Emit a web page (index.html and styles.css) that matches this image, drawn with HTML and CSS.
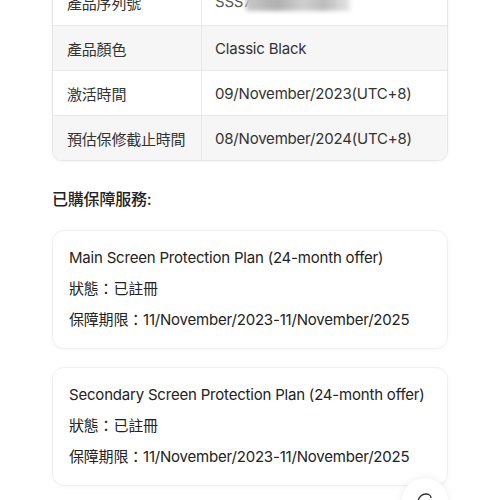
FILE: index.html
```html
<!DOCTYPE html>
<html lang="zh-Hant">
<head>
<meta charset="utf-8">
<link rel="stylesheet" href="styles.css">
</head>
<body>
<div class="page">
  <div class="table">
    <div class="row">
      <div class="cell key">產品序列號</div>
      <div class="cell val serial"><span class="sn">SSS7</span><span class="blur"></span></div>
    </div>
    <div class="row alt">
      <div class="cell key">產品顏色</div>
      <div class="cell val">Classic Black</div>
    </div>
    <div class="row">
      <div class="cell key">激活時間</div>
      <div class="cell val">09/November/2023(UTC+8)</div>
    </div>
    <div class="row alt">
      <div class="cell key">預估保修截止時間</div>
      <div class="cell val">08/November/2024(UTC+8)</div>
    </div>
  </div>

  <h2 class="heading">已購保障服務:</h2>

  <div class="card">
    <div class="line">Main Screen Protection Plan (24-month offer)</div>
    <div class="line">狀態：已註冊</div>
    <div class="line">保障期限：11/November/2023-11/November/2025</div>
  </div>

  <div class="card">
    <div class="line">Secondary Screen Protection Plan (24-month offer)</div>
    <div class="line">狀態：已註冊</div>
    <div class="line">保障期限：11/November/2023-11/November/2025</div>
  </div>
</div>
<div class="fab">
  <svg width="24" height="24" viewBox="0 0 24 24" fill="none" stroke="#333" stroke-width="1.4">
    <path d="M5 14 C5 8 9 5 13 5 C16 5 18 7 18 9"/>
  </svg>
</div>
</body>
</html>
```

FILE: styles.css
```css
html, body {
  margin: 0;
  padding: 0;
  background: #ffffff;
  overflow: hidden;
  height: 500px;
}
body {
  font-family: Inter, "Noto Sans CJK TC", sans-serif;
  color: #222;
  position: relative;
  letter-spacing: -0.2px;
}
.page {
  padding: 0 52px;
}
.table {
  margin-top: -22px;
  border: 1px solid #e6e6e6;
  border-radius: 10px;
  overflow: hidden;
  box-shadow: 0 1px 3px rgba(0,0,0,0.05);
}
.row {
  box-sizing: border-box;
  display: grid;
  grid-template-columns: 149px 1fr;
  height: 45px;
  border-top: 1px solid #e8e8e8;
}
.row:first-child {
  border-top: none;
  height: 46px;
}
.row.alt {
  background: #f6f6f6;
}
.cell {
  display: flex;
  align-items: center;
  font-size: 15px;
  color: #333;
}
.key {
  padding-left: 14px;
  border-right: 1px solid #e8e8e8;
}
.val {
  padding-left: 13px;
}
.serial {
  align-items: flex-end;
  padding-bottom: 14px;
}
.sn {
  color: #555;
}
.blur {
  display: inline-block;
  width: 104px;
  height: 18px;
  margin-left: -6px;
  background: linear-gradient(90deg, #c8c8c8, #b0b0b0 30%, #cfcfcf 55%, #bcbcbc 75%, #e6e6e6);
  filter: blur(2px);
}
.heading {
  margin: 27px 0 20px;
  font-size: 16px;
  font-weight: 500;
  color: #222;
  line-height: 22px;
}
.card {
  border: 1px solid #efefef;
  border-radius: 12px;
  padding: 16px 16px 17px 16px;
  margin-bottom: 18px;
  display: flex;
  flex-direction: column;
  gap: 9px;
  box-shadow: 0 1px 4px rgba(0,0,0,0.03);
}
.line {
  font-size: 15px;
  line-height: 22px;
  color: #222;
}
.fab {
  position: absolute;
  left: 402px;
  top: 478px;
  width: 46px;
  height: 46px;
  border-radius: 50%;
  background: #fff;
  box-shadow: 0 0 8px rgba(0,0,0,0.08);
  display: flex;
  align-items: center;
  justify-content: center;
}
```
